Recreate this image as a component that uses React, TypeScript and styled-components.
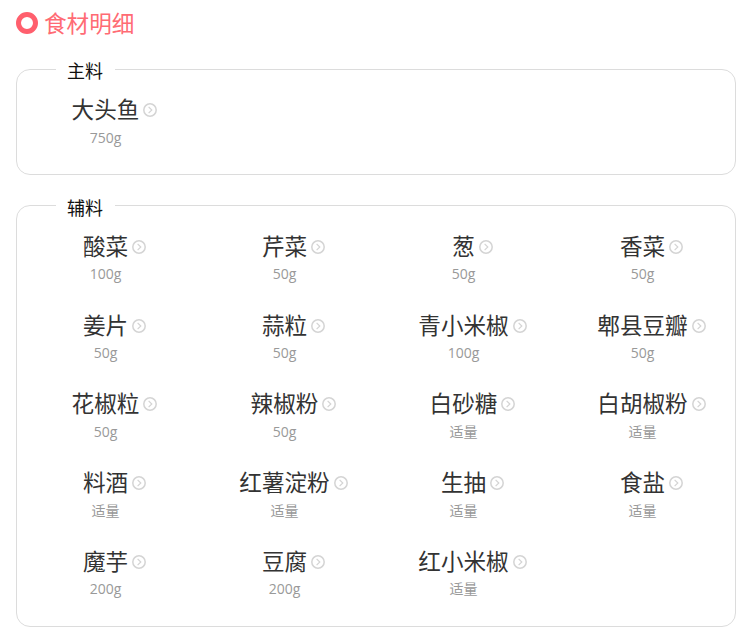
import React from "react";
import styled, { createGlobalStyle } from "styled-components";

const Global = createGlobalStyle`
  html, body { margin: 0; padding: 0; background: #fff; }
  body { font-family: "Noto Sans CJK SC", "Noto Sans", sans-serif; }
`;

const Page = styled.div`
  width: 720px;
  padding: 10px 0 0 16px;
`;

const Heading = styled.h2`
  display: flex;
  align-items: center;
  gap: 6px;
  box-sizing: border-box;
  height: 28px;
  margin: 0 0 18px;
  padding-bottom: 2px;
  font-size: 22.6px;
  font-weight: 400;
  line-height: 26px;
  color: #ff6b74;
`;

const Ring = styled.span`
  box-sizing: border-box;
  width: 22px;
  height: 22px;
  border: 5.5px solid #ff5f6d;
  border-radius: 50%;
`;

const Group = styled.fieldset`
  margin: 0 0 18px;
  padding: 0 0 10px;
  border: 1px solid #dcdcdc;
  border-radius: 14px;
  min-width: 0;
`;

const Legend = styled.legend`
  margin-left: 39px;
  padding: 2px 12px 0 11px;
  font-size: 18px;
  line-height: 24px;
  color: #111;
`;

const Grid = styled.div`
  display: grid;
  grid-template-columns: repeat(4, 179px);
  grid-auto-rows: 78.8px;
  margin: 3px 0 0 -1px;
`;

const Cell = styled.div`
  display: flex;
  flex-direction: column;
  align-items: center;
`;

const NameLine = styled.div`
  position: relative;
  margin-top: 9px;
  font-size: 22.6px;
  line-height: 30px;
  color: #333;
  white-space: nowrap;
`;

const Arrow = styled.svg`
  position: absolute;
  left: 100%;
  top: 9px;
  margin-left: 4px;
  width: 14px;
  height: 14px;
`;

const Amount = styled.div`
  margin-top: 3.5px;
  font-family: "Open Sans", "Noto Sans CJK SC", sans-serif;
  font-size: 14px;
  line-height: 20px;
  color: #999;
`;

const main = [["大头鱼", "750g"]];
const aux = [
  ["酸菜", "100g"], ["芹菜", "50g"], ["葱", "50g"], ["香菜", "50g"],
  ["姜片", "50g"], ["蒜粒", "50g"], ["青小米椒", "100g"], ["郫县豆瓣", "50g"],
  ["花椒粒", "50g"], ["辣椒粉", "50g"], ["白砂糖", "适量"], ["白胡椒粉", "适量"],
  ["料酒", "适量"], ["红薯淀粉", "适量"], ["生抽", "适量"], ["食盐", "适量"],
  ["魔芋", "200g"], ["豆腐", "200g"], ["红小米椒", "适量"],
];

const Chevron = () => (
  <Arrow viewBox="0 0 14 14" fill="none" stroke="#d4d4d4">
    <circle cx="7" cy="7" r="6.2" strokeWidth="1.5" />
    <path d="M5.6 3.8 8.8 7l-3.2 3.2" strokeWidth="1.2" />
  </Arrow>
);

const Section = ({ title, items }: { title: string; items: string[][] }) => (
  <Group>
    <Legend>{title}</Legend>
    <Grid>
      {items.map(([name, amount]) => (
        <Cell key={name}>
          <NameLine>
            {name}
            <Chevron />
          </NameLine>
          <Amount>{amount}</Amount>
        </Cell>
      ))}
    </Grid>
  </Group>
);

export default function App() {
  return (
    <Page>
      <Global />
      <Heading>
        <Ring />
        食材明细
      </Heading>
      <Section title="主料" items={main} />
      <Section title="辅料" items={aux} />
    </Page>
  );
}
